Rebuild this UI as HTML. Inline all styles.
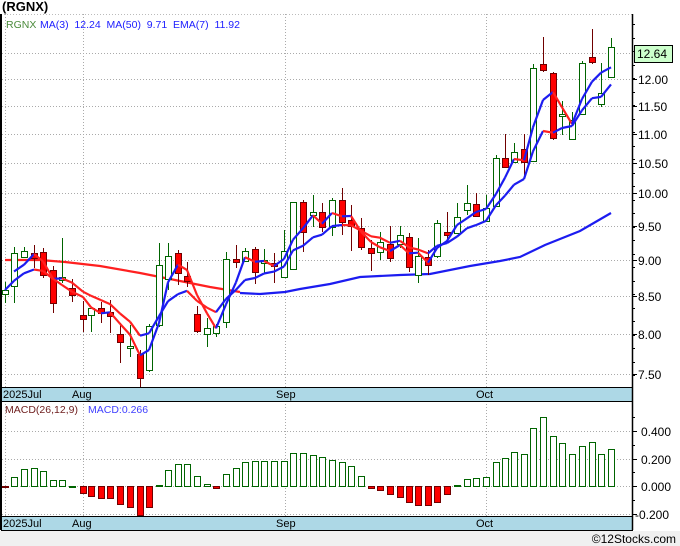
<!DOCTYPE html>
<html><head><meta charset="utf-8"><style>
body{margin:0;width:680px;height:546px;background:#fff;overflow:hidden;font-family:"Liberation Sans",sans-serif}
svg{position:absolute;left:0;top:0}
</style></head><body>
<svg id="s" width="680" height="546" xmlns="http://www.w3.org/2000/svg" font-family="Liberation Sans, sans-serif"></svg>
<script>
var C=[[5,290,294,282,303,'g'],[14,253,286,247,303,'g'],[24,251,257,247,258,'g'],[34,253,258,245,268,'r'],[43,252,275,248,278,'r'],[53,270,303,266,313,'r'],[62,277,280,238,283,'g'],[72,288,295,279,302,'r'],[83,315,319,301,332,'r'],[91,308,315,308,332,'g'],[101,308,313,302,323,'r'],[110,312,316,300,333,'r'],[120,334,342,323,363,'r'],[130,346,348,325,357,'g'],[140,354,378,350,387,'r'],[149,326,370,324,372,'g'],[159,265,325,243,327,'g'],[168,256,279,243,290,'g'],[178,253,273,250,285,'r'],[187,276,281,262,287,'r'],[197,314,331,306,333,'r'],[207,328,334,318,347,'g'],[216,326,333,324,337,'g'],[226,259,322,252,328,'g'],[236,259,262,245,268,'r'],[245,251,261,248,262,'g'],[255,249,272,247,284,'r'],[264,260,263,249,273,'g'],[274,263,266,253,283,'r'],[284,251,277,230,277,'g'],[293,202,269,202,270,'g'],[303,202,232,200,252,'r'],[313,212,215,195,227,'g'],[322,212,227,203,232,'r'],[332,200,227,198,236,'g'],[342,200,222,188,235,'r'],[351,220,226,205,251,'r'],[361,228,247,218,250,'r'],[371,248,253,240,271,'r'],[380,242,252,232,260,'g'],[390,244,258,226,262,'r'],[400,235,244,226,248,'g'],[409,237,267,233,272,'r'],[418,256,275,238,283,'g'],[428,257,265,250,275,'r'],[437,223,256,220,258,'g'],[447,232,235,212,242,'r'],[457,217,233,203,234,'g'],[467,203,210,185,215,'g'],[476,204,216,193,217,'r'],[486,208,221,195,222,'g'],[496,158,206,155,206,'g'],[505,158,167,134,168,'r'],[514,152,162,143,163,'g'],[524,149,162,134,177,'r'],[533,68,161,64,162,'g'],[543,64,70,37,72,'r'],[553,73,138,72,140,'r'],[562,114,116,101,135,'g'],[572,120,139,112,140,'g'],[582,63,114,61,114,'g'],[592,57,62,29,64,'r'],[601,93,104,63,107,'g'],[611,47,77,38,77,'g']];
var M=[486.5,477,469,468,471,480,480,485.5,493,496,498,498,504,507,515,507,485,470,464,464,476,484,488,474,468,462,461,461,461,461,453,453,455,457,460,462,466,476,488,490,494,497,502,505,505,502,494,485,479,478,477,462,458,452,454,428,417,436,443,454,446,442,454,449];
var h='';
function L(x1,y1,x2,y2,c,w,d){h+='<line x1="'+x1+'" y1="'+y1+'" x2="'+x2+'" y2="'+y2+'" stroke="'+c+'" stroke-width="'+(w||1)+'"'+(d?' stroke-dasharray="'+d+'"':'')+'/>';}
function T(x,y,t,c,s,e){h+='<text x="'+x+'" y="'+y+'" fill="'+c+'" font-size="'+s+'" '+(e||'')+'>'+t+'</text>';}
h+='<rect x="0" y="531" width="680" height="15" fill="#f0f0f0"/>';
T(676,543,'©12Stocks.com','#000',12,'text-anchor="end"');
T(2,11,'(RGNX)','#000',13,'font-weight="bold"');
[53,79,106,134,163,193,226,260,296,334,374].forEach(function(y){L(2,y+.5,632,y+.5,'#aaa',1,'1,2');});
[5,83,285,486].forEach(function(x){L(x+.5,14,x+.5,387,'#aaa',1,'1,2');L(x+.5,401,x+.5,516,'#aaa',1,'1,2');});
[431,459,486,514].forEach(function(y){L(2,y+.5,632,y+.5,'#aaa',1,'1,2');});
L(1,14.5,632,14.5,'#bbb',1,'1,2');
h+='<rect x="1.5" y="387.5" width="631" height="14" fill="#add8e6" stroke="#000"/>';
h+='<rect x="1.5" y="516.5" width="631" height="14" fill="#add8e6" stroke="#000"/>';
[['2025Jul',3],['Aug',72],['Sep',276],['Oct',476]].forEach(function(a){T(a[1],398,a[0],'#000',11);T(a[1],527,a[0],'#000',11);});
L(1,14,1,530,'#000',2);L(632.5,14,632.5,530,'#000',1.5);
var yl=[[12.00,79],[11.50,106],[11.00,134],[10.50,163],[10.00,193],[9.50,226],[9.00,260],[8.50,296],[8.00,334],[7.50,374]];
yl.forEach(function(a){L(632,a[1]+.5,637,a[1]+.5,'#000');T(638,a[1]+5,a[0].toFixed(2),'#000',12);});
for(var y=24;y<387;y+=13.5)L(632,Math.round(y)+.5,635,Math.round(y)+.5,'#000');
[[0.4,431,'0.400'],[0.2,459,'0.200'],[0,486,'0.000'],[-0.2,514,'-0.200']].forEach(function(a){L(632,a[1]+.5,637,a[1]+.5,'#000');T(a[2][0]=='-'?635:641,a[1]+5,a[2],'#000',12);});
[417,445,472,500].forEach(function(y){L(632,y+.5,635,y+.5,'#000');});
h+='<rect x="634.5" y="45.5" width="38" height="17" fill="#ccffcc" stroke="#000"/>';
T(637,58,'12.64','#000',12);
var r50=[[5,260],[40,260],[65,262],[100,266],[140,273],[180,281],[210,287],[240,292]];
var b50=[[240,293],[260,294],[285,292],[300,289],[330,284],[360,277],[400,275],[430,274],[470,266],[500,261],[520,257],[545,245],[580,231],[611,213]];
function P(pts,c){h+='<polyline fill="none" stroke="'+c+'" stroke-width="2.2" points="'+pts.map(function(p){return p.join(',')}).join(' ')+'"/>';}
P(r50,'#ff2020');P(b50,'#1c1cf0');
C.forEach(function(c){var col=c[5]=='g'?'#006400':'#700000';L(c[0]+.5,c[3],c[0]+.5,c[4],col);
h+='<rect x="'+(c[0]-3+.5)+'" y="'+(c[1]+.5)+'" width="6" height="'+Math.max(1,c[2]-c[1])+'" fill="'+(c[5]=='g'?'#fff':'#f00')+'" stroke="'+col+'"/>';});
var cl=C.map(function(c){return c[5]=='g'?c[1]:c[2];});
var ma=[],em=[],e=cl[0];
for(var i=0;i<cl.length;i++){var a=cl.slice(Math.max(0,i-2),i+1);ma.push(a.reduce(function(s,v){return s+v},0)/a.length);e=i?e+(cl[i]-e)*0.25:cl[0];em.push(e);}
function seg(arr,start){for(var i=start;i<arr.length-1;i++){var col=arr[i+1]<=arr[i]?'#1c1cf0':'#ff2020';L(C[i][0],arr[i].toFixed(1),C[i+1][0],arr[i+1].toFixed(1),col,2.2);}}
seg(em,0);seg(ma,1);
M.forEach(function(v,i){if(!C[i])return;var x=C[i][0];var g=v<486;
var y=g?v:486,hh=Math.max(1,Math.round(Math.abs(v-486)));
h+='<rect x="'+(x-2.5)+'" y="'+(Math.round(y)+.5)+'" width="6" height="'+hh+'" fill="'+(g?'#fff':'#f00')+'" stroke="'+(g?'#006400':'#700000')+'"/>';});
T(6,28,'RGNX','#4a8a3a',10.5);T(40,28,'MA(3)&#160;&#160;12.24&#160;&#160;MA(50)&#160;&#160;9.71&#160;&#160;EMA(7)&#160;&#160;11.92','#2020ff',10.5);
T(5,413,'MACD(26,12,9)','#702020',10.5);T(88,413,'MACD:0.266','#4040ff',10.5);
document.getElementById('s').innerHTML=h;
</script>
</body></html>
